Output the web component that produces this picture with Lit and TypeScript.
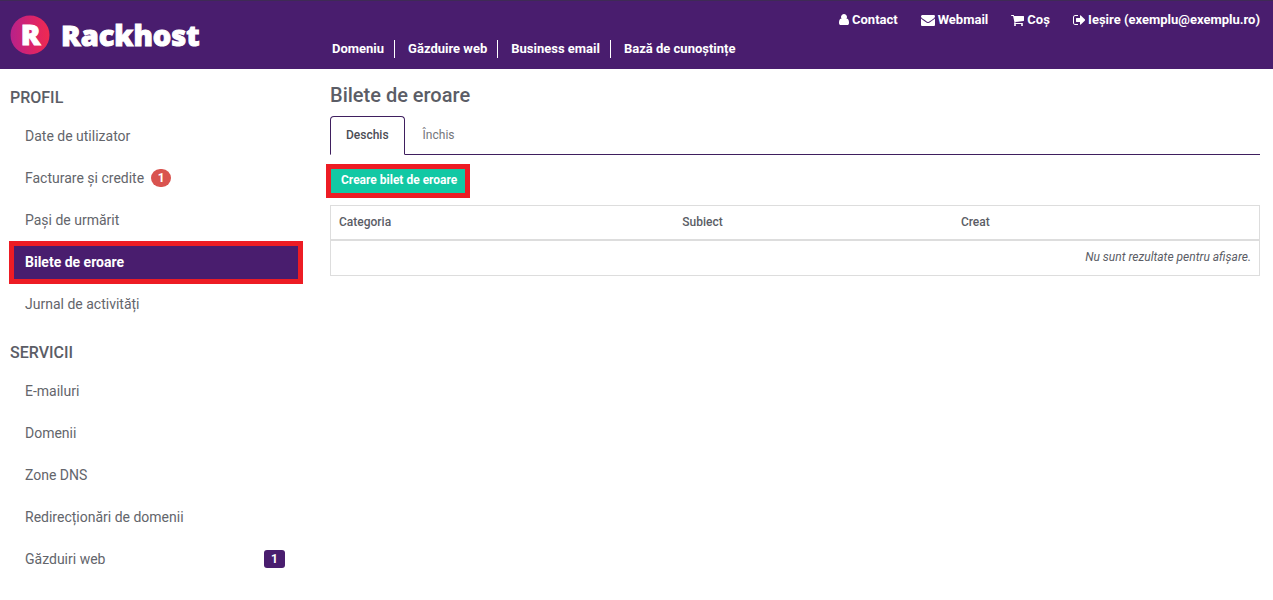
import { LitElement, html, css, svg, nothing } from "lit";
import { customElement, property } from "lit/decorators.js";

interface MenuItem {
  label: string;
  count?: number;
  badge?: "alert" | "total";
  active?: boolean;
}

const PROFILE: MenuItem[] = [
  { label: "Date de utilizator" },
  { label: "Facturare și credite", count: 1, badge: "alert" },
  { label: "Pași de urmărit" },
  { label: "Bilete de eroare", active: true },
  { label: "Jurnal de activități" },
];

const SERVICES: MenuItem[] = [
  { label: "E-mailuri" },
  { label: "Domenii" },
  { label: "Zone DNS" },
  { label: "Redirecționări de domenii" },
  { label: "Găzduiri web", count: 1, badge: "total" },
];

const ICONS = {
  user: {
    w: 1280,
    d: "M1280 1271q0 109-62.500 187t-150.500 78h-854q-88 0-150.500-78t-62.500-187q0-85 8.500-160.500t31.500-152 58.500-131 94-89 134.500-34.500q131 128 313 128t313-128q76 0 134.500 34.500t94 89 58.500 131 31.500 152 8.500 160.500zM1024 512q0 159-112.500 271.500t-271.500 112.500-271.500-112.500-112.500-271.500 112.500-271.500 271.500-112.500 271.500 112.500 112.500 271.500z",
  },
  mail: {
    w: 1792,
    d: "M1792 710v794q0 66-47 113t-113 47h-1472q-66 0-113-47t-47-113v-794q44 49 101 87 362 246 497 345 57 42 92.500 65.500t94.500 48 110 24.500h2q51 0 110-24.500t94.500-48 92.500-65.500q170-123 498-345 57-39 100-87zM1792 416q0 79-49 151t-122 123q-376 261-468 325-10 7-42.500 31t-54 38.500-52 32.500-57.500 27-50 9h-2q-23 0-50-9t-57.500-27-52-32.500-54-38.500-42.500-31q-91-64-262-182.500t-205-142.500q-62-42-117-115.500t-55-136.500q0-78 41.500-130t118.500-52h1472q65 0 112.500 47t47.500 113z",
  },
  cart: {
    w: 1664,
    d: "M640 1536q0 52-38 90t-90 38-90-38-38-90 38-90 90-38 90 38 38 90zM1536 1536q0 52-38 90t-90 38-90-38-38-90 38-90 90-38 90 38 38 90zM1664 448v512q0 24-16.500 42.500t-40.500 21.500l-1044 122q13 60 13 70 0 16-24 64h920q26 0 45 19t19 45-19 45-45 19h-1024q-26 0-45-19t-19-45q0-11 8-31.500t16-36 21.500-40 15.500-29.500l-177-823h-204q-26 0-45-19t-19-45 19-45 45-19h256q16 0 28.500 6.500t19.500 15.500 13 24.500 8 26 5.500 29.500 4.500 26h1201q26 0 45 19t19 45z",
  },
  exit: {
    w: 1568,
    d: "M640 1440q0 4 1 20t.5 26.500-3 23.500-10 19.500-20.500 6.500h-320q-119 0-203.500-84.500t-84.500-203.500v-704q0-119 84.500-203.500t203.500-84.500h320q13 0 22.500 9.500t9.500 22.500q0 4 1 20t.5 26.500-3 23.500-10 19.500-20.500 6.500h-320q-66 0-113 47t-47 113v704q0 66 47 113t113 47h312l11.500 1 11.500 3 8 5.500 7 9 2 13.500zM1568 896q0 26-19 45l-544 544q-19 19-45 19t-45-19-19-45v-288h-448q-26 0-45-19t-19-45v-384q0-26 19-45t45-19h448v-288q0-26 19-45t45-19 45 19l544 544q19 19 19 45z",
  },
};

@customElement("rh-icon")
class RhIcon extends LitElement {
  @property() name: keyof typeof ICONS = "user";

  static styles = css`
    :host { display: inline-flex; }
    .glyph { display: block; height: 14px; width: auto; fill: currentColor; }
  `;

  render() {
    const icon = ICONS[this.name];
    return html`<svg class="glyph" viewBox="0 0 ${icon.w} 1792" aria-hidden="true">
      ${svg`<path d=${icon.d} />`}
    </svg>`;
  }
}

@customElement("rh-header")
class RhHeader extends LitElement {
  static styles = css`
    :host {
      display: flex;
      height: 69px;
      box-sizing: border-box;
      padding: 0 13px 0 10px;
      background: #491d6e;
      border-top: 1px solid #3e2a55;
      color: #fff;
      font-size: 13px;
      font-weight: 700;
      line-height: 18px;
    }
    a { color: inherit; text-decoration: none; }
    .brand { display: flex; align-items: center; gap: 11px; width: 322px; flex: none; }
    .mark { width: 40px; height: 40px; display: block; }
    .wordmark { font: 900 29px/40px "Noto Sans", "Open Sans", sans-serif; -webkit-text-stroke: 1px #fff; }
    .letter { font: 900 29px "Noto Sans", "Open Sans", sans-serif; fill: #fff; stroke: #fff; stroke-width: 1px; }
    .bars { flex: 1; display: flex; flex-direction: column; justify-content: space-between; padding: 10px 0 11px; }
    .account, .nav { display: flex; list-style: none; margin: 0; padding: 0; }
    .account { justify-content: flex-end; gap: 23px; }
    .account a { display: flex; align-items: center; gap: 3px; }
    .nav li + li { margin-left: 10px; padding-left: 13px; border-left: 1px solid #fff; }
  `;

  render() {
    return html`
      <a class="brand" href="#" aria-label="Rackhost">
        <svg class="mark" viewBox="0 0 40 40" aria-hidden="true">
          <defs>
            <linearGradient id="disc" x1="0" y1="0" x2="1" y2="0">
              <stop offset="0" stop-color="#b7218a" />
              <stop offset="0.6" stop-color="#dd2468" />
              <stop offset="1" stop-color="#ee2a50" />
            </linearGradient>
          </defs>
          <circle cx="20" cy="20" r="19.500" fill="url(#disc)" />
          <text class="letter" x="20.500" y="30" text-anchor="middle">R</text>
        </svg>
        <span class="wordmark">Rackhost</span>
      </a>
      <div class="bars">
        <ul class="account">
          <li><a href="#"><rh-icon name="user"></rh-icon>Contact</a></li>
          <li><a href="#"><rh-icon name="mail"></rh-icon>Webmail</a></li>
          <li><a href="#"><rh-icon name="cart"></rh-icon>Coș</a></li>
          <li><a href="#"><rh-icon name="exit"></rh-icon>Ieșire (exemplu@exemplu.ro)</a></li>
        </ul>
        <ul class="nav">
          <li><a href="#">Domeniu</a></li>
          <li><a href="#">Găzduire web</a></li>
          <li><a href="#">Business email</a></li>
          <li><a href="#">Bază de cunoștințe</a></li>
        </ul>
      </div>
    `;
  }
}

@customElement("rh-menu")
class RhMenu extends LitElement {
  @property() heading = "";
  @property({ attribute: false }) items: MenuItem[] = [];

  static styles = css`
    :host { display: block; }
    .title { margin: 0; padding-left: 1px; font-size: 16px; line-height: 20px; font-weight: 500; }
    .list { list-style: none; margin: 7px 0 0; padding: 0; }
    .item {
      display: flex;
      align-items: center;
      height: 43px;
      box-sizing: border-box;
      margin-bottom: -1px;
      padding: 0 13px 2px 11px;
      border: 5px solid transparent;
      color: #63656b;
      font-size: 14px;
      text-decoration: none;
    }
    .active { position: relative; background: #491d6e; border-color: #ed1c24; color: #fff; font-weight: 700; }
    .badge { color: #fff; font-size: 12px; line-height: 18px; font-weight: 700; text-align: center; }
    .alert { margin-left: 7px; width: 20px; border-radius: 9px; background: #d9534f; }
    .total { margin-left: auto; width: 21px; border-radius: 3px; background: #491d6e; }
  `;

  render() {
    return html`
      <h2 class="title">${this.heading}</h2>
      <ul class="list">
        ${this.items.map(
          (item) => html`<li>
            <a class="item ${item.active ? "active" : ""}" href="#">
              ${item.label}${item.count
                ? html`<span class="badge ${item.badge}">${item.count}</span>`
                : nothing}
            </a>
          </li>`
        )}
      </ul>
    `;
  }
}

@customElement("app-root")
class AppRoot extends LitElement {
  static styles = css`
    :host {
      display: block;
      min-height: 100vh;
      background: #fff;
      color: #5b5d66;
      font-family: Roboto, "Liberation Sans", sans-serif;
      font-size: 12px;
      line-height: 18px;
    }
    .page { display: flex; gap: 27px; padding: 17px 13px 0 9px; }
    .side { flex: none; width: 294px; display: flex; flex-direction: column; gap: 18px; padding-top: 2px; }
    .main { flex: 1; min-width: 0; }
    .title { margin: 0 0 12px; font-size: 20px; line-height: 18px; font-weight: 500; }
    .tabs { display: flex; gap: 2px; border-bottom: 1px solid #3f1f5f; }
    .tab {
      height: 39px;
      box-sizing: border-box;
      margin-bottom: -1px;
      padding: 0 15px 2px;
      border: 1px solid transparent;
      background: none;
      color: #74767c;
      font: inherit;
    }
    .selected {
      border-color: #3f1f5f;
      border-bottom-color: #fff;
      border-radius: 4px 4px 0 0;
      background: #fff;
      color: #4b4d55;
      font-weight: 500;
    }
    .create {
      display: block;
      height: 34px;
      margin: 9px 0 7px -4px;
      padding: 0 8px 2px 10px;
      border: 5px solid #ed1c24;
      background: #12c8a4;
      color: #fff;
      font: inherit;
      font-weight: 700;
    }
    .tickets { width: 100%; border-collapse: collapse; border: 1px solid #ddd; table-layout: fixed; }
    .tickets th { box-sizing: border-box; padding: 7px 8px 8px; text-align: left; font-weight: 500; border-bottom: 2px solid #ddd; }
    .tickets td { padding: 7px 8px 9px; text-align: right; font-style: italic; }
    .category { width: 37%; }
    .subject { width: 30%; }
  `;

  render() {
    return html`
      <rh-header></rh-header>
      <div class="page">
        <nav class="side">
          <rh-menu heading="PROFIL" .items=${PROFILE}></rh-menu>
          <rh-menu heading="SERVICII" .items=${SERVICES}></rh-menu>
        </nav>
        <main class="main">
          <h1 class="title">Bilete de eroare</h1>
          <div class="tabs" role="tablist">
            <button class="tab selected" role="tab" aria-selected="true">Deschis</button>
            <button class="tab" role="tab" aria-selected="false">Închis</button>
          </div>
          <button class="create">Creare bilet de eroare</button>
          <table class="tickets">
            <thead>
              <tr>
                <th class="category" scope="col">Categoria</th>
                <th class="subject" scope="col">Subiect</th>
                <th scope="col">Creat</th>
              </tr>
            </thead>
            <tbody>
              <tr><td colspan="3">Nu sunt rezultate pentru afișare.</td></tr>
            </tbody>
          </table>
        </main>
      </div>
    `;
  }
}
